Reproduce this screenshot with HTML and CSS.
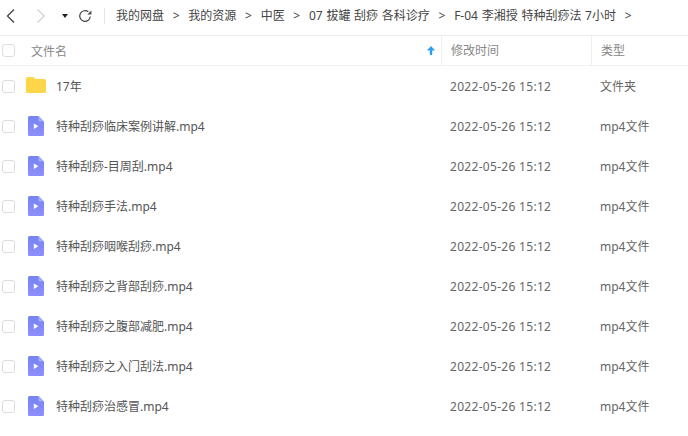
FILE: index.html
```html
<!DOCTYPE html>
<html lang="zh">
<head>
<meta charset="utf-8">
<title>我的网盘</title>
<link rel="stylesheet" href="styles.css">
</head>
<body>
<svg class="defs" width="0" height="0" aria-hidden="true">
  <defs>
    <linearGradient id="vid" x1="0" y1="0" x2="0" y2="1">
      <stop offset="0" stop-color="#7484f3"/>
      <stop offset="1" stop-color="#8d8ffb"/>
    </linearGradient>
    <symbol id="video" viewBox="0 0 16 20">
      <path d="M1.5 0H10.5L16 5.5V18.5A1.5 1.5 0 0 1 14.5 20H1.5A1.5 1.5 0 0 1 0 18.5V1.5A1.5 1.5 0 0 1 1.5 0Z" fill="url(#vid)"/>
      <path d="M10.5 0L16 5.5H12A1.5 1.5 0 0 1 10.5 4Z" fill="#a5abf8"/>
      <path d="M5.8 7.4L10.4 10.2L5.8 13Z" fill="#fff"/>
    </symbol>
  </defs>
</svg>
<main class="page">
  <nav class="toolbar">
    <div class="nav-icons">
      <svg class="ic back" width="10" height="16" viewBox="0 0 10 16"><path d="M8 1.5L1.5 8L8 14.5" fill="none" stroke="#444" stroke-width="1.3"/></svg>
      <svg class="ic forward" width="10" height="16" viewBox="0 0 10 16"><path d="M1.5 1.5L8 8L1.5 14.5" fill="none" stroke="#cfcfcf" stroke-width="1.3"/></svg>
      <svg class="ic caret" width="6" height="4" viewBox="0 0 6 4"><path d="M0 0H6L3 4Z" fill="#222"/></svg>
      <svg class="ic refresh" width="14" height="14" viewBox="0 0 14 14"><path d="M12.3 7.5A5.3 5.3 0 1 1 10.4 2.9" fill="none" stroke="#444" stroke-width="1.2"/><path d="M9.4 5.4H13.4V1.6Z" fill="#444"/></svg>
    </div>
    <div class="crumbs">
      <span>我的网盘</span><i>&gt;</i>
      <span>我的资源</span><i>&gt;</i>
      <span>中医</span><i>&gt;</i>
      <span>07 拔罐 刮痧 各科诊疗</span><i>&gt;</i>
      <span>F-04 李湘授 特种刮痧法 7小时</span><i>&gt;</i>
    </div>
  </nav>
  <section class="list">
    <header class="row head">
      <div class="name-cell"><span class="check"></span><span class="head-name">文件名</span>
        <svg class="sort" width="8" height="9" viewBox="0 0 8 9"><path d="M4 0L8 4.5H5.2V9H2.8V4.5H0Z" fill="#2a9df4"/></svg>
      </div>
      <div class="date-cell">修改时间</div>
      <div class="type-cell">类型</div>
    </header>
    <div class="row">
      <div class="name-cell"><span class="check"></span>
        <svg class="folder" width="20" height="16" viewBox="0 0 20 16"><path d="M1.5 0H7.5L9.5 2H18.5A1.5 1.5 0 0 1 20 3.5V14.5A1.5 1.5 0 0 1 18.5 16H1.5A1.5 1.5 0 0 1 0 14.5V1.5A1.5 1.5 0 0 1 1.5 0Z" fill="#ffd54a"/></svg>
        <span class="fname">17年</span></div>
      <div class="date-cell"><span class="stamp">2022-05-26 15:12</span></div><div class="type-cell">文件夹</div>
    </div>
    <div class="row">
      <div class="name-cell"><span class="check"></span><svg class="file"><use href="#video"/></svg><span class="fname">特种刮痧临床案例讲解.mp4</span></div>
      <div class="date-cell"><span class="stamp">2022-05-26 15:12</span></div><div class="type-cell">mp4文件</div>
    </div>
    <div class="row">
      <div class="name-cell"><span class="check"></span><svg class="file"><use href="#video"/></svg><span class="fname">特种刮痧-目周刮.mp4</span></div>
      <div class="date-cell"><span class="stamp">2022-05-26 15:12</span></div><div class="type-cell">mp4文件</div>
    </div>
    <div class="row">
      <div class="name-cell"><span class="check"></span><svg class="file"><use href="#video"/></svg><span class="fname">特种刮痧手法.mp4</span></div>
      <div class="date-cell"><span class="stamp">2022-05-26 15:12</span></div><div class="type-cell">mp4文件</div>
    </div>
    <div class="row">
      <div class="name-cell"><span class="check"></span><svg class="file"><use href="#video"/></svg><span class="fname">特种刮痧咽喉刮痧.mp4</span></div>
      <div class="date-cell"><span class="stamp">2022-05-26 15:12</span></div><div class="type-cell">mp4文件</div>
    </div>
    <div class="row">
      <div class="name-cell"><span class="check"></span><svg class="file"><use href="#video"/></svg><span class="fname">特种刮痧之背部刮痧.mp4</span></div>
      <div class="date-cell"><span class="stamp">2022-05-26 15:12</span></div><div class="type-cell">mp4文件</div>
    </div>
    <div class="row">
      <div class="name-cell"><span class="check"></span><svg class="file"><use href="#video"/></svg><span class="fname">特种刮痧之腹部减肥.mp4</span></div>
      <div class="date-cell"><span class="stamp">2022-05-26 15:12</span></div><div class="type-cell">mp4文件</div>
    </div>
    <div class="row">
      <div class="name-cell"><span class="check"></span><svg class="file"><use href="#video"/></svg><span class="fname">特种刮痧之入门刮法.mp4</span></div>
      <div class="date-cell"><span class="stamp">2022-05-26 15:12</span></div><div class="type-cell">mp4文件</div>
    </div>
    <div class="row">
      <div class="name-cell"><span class="check"></span><svg class="file"><use href="#video"/></svg><span class="fname">特种刮痧治感冒.mp4</span></div>
      <div class="date-cell"><span class="stamp">2022-05-26 15:12</span></div><div class="type-cell">mp4文件</div>
    </div>
  </section>
</main>
</body>
</html>
```
FILE: styles.css
```css
* { box-sizing: border-box; }
html, body { margin: 0; padding: 0; background: #fff; }
body {
  width: 688px;
  height: 436px;
  overflow: hidden;
  font-family: "Noto Sans", "Noto Sans CJK SC", sans-serif;
  font-size: 12px;
  color: #666;
}
.defs { position: absolute; }
.page { display: flex; flex-direction: column; }
.toolbar {
  height: 36px;
  display: flex;
  align-items: center;
  border-bottom: 1px solid #ececec;
  padding-bottom: 3px;
}
.nav-icons {
  width: 105px;
  height: 16px;
  display: flex;
  align-items: center;
  border-right: 1px solid #e6e6e6;
  padding-left: 6px;
}
.ic { flex: none; display: block; }
.forward { margin-left: 20px; }
.caret { margin-left: 16px; }
.refresh { margin-left: 10px; }
.crumbs {
  margin-left: 11px;
  display: flex;
  align-items: center;
  color: #444;
  white-space: nowrap;
  line-height: 16px;
  word-spacing: 0.6px;
}
.crumbs i {
  font-style: normal;
  width: 24.3px;
  text-align: center;
}
.row {
  height: 40px;
  display: grid;
  grid-template-columns: 441px 150px 97px;
  align-items: center;
}
.head {
  height: 30px;
  border-bottom: 1px solid #f0f0f0;
  color: #888;
}
.head .date-cell, .head .type-cell {
  height: 29px;
  line-height: 29px;
  border-left: 1px solid #eee;
}
.name-cell {
  display: flex;
  align-items: center;
  padding-left: 2px;
}
.date-cell { padding-left: 9px; }
.type-cell { padding-left: 9px; }
.stamp { letter-spacing: 0.3px; }
.check {
  width: 13px;
  height: 13px;
  flex: none;
  border: 1px solid #ddd;
  border-radius: 3px;
  background: #fff;
}
.head-name { margin-left: 16px; flex: 1; }
.sort { margin-right: 6px; }
.folder { margin-left: 11px; margin-bottom: 2px; flex: none; }
.file { margin-left: 13px; width: 16px; height: 20px; flex: none; }
.fname { margin-left: 10px; white-space: nowrap; color: #555; }
.file + .fname { margin-left: 12px; }
```
